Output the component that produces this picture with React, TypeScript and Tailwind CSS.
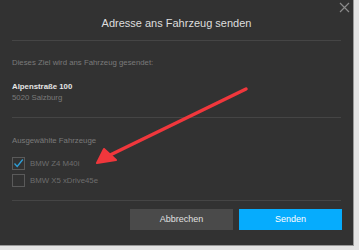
import { useState } from 'react';

const vehicles = [
	{ id: 'z4', name: 'BMW Z4 M40i' },
	{ id: 'x5', name: 'BMW X5 xDrive45e' },
];

const font = { fontFamily: '"Liberation Sans", Arial, sans-serif' };

export default function App() {
	const [selected, setSelected] = useState<Record<string, boolean>>({ z4: true, x5: false });

	return (
		<div className="w-[359px] h-[250px] bg-[#e4e4e4] overflow-hidden" style={font}>
			<div className="relative w-[354px] h-[246px] bg-[#323232] border-r border-b border-[#9a9a9a] flex flex-col px-3">
				{/* close */}
				<button className="absolute right-[3px] top-[2px] text-[#8a8a8a]">
					<svg width="11" height="11" viewBox="0 0 11 11" stroke="currentColor" strokeWidth="1.2">
						<path d="M1 1 L10 10 M10 1 L1 10" />
					</svg>
				</button>

				{/* title */}
				<h2 className="h-[41px] flex items-center justify-center text-[11px] text-[#dedede] pt-[6px] border-b border-[#454545]">
					Adresse ans Fahrzeug senden
				</h2>

				{/* destination */}
				<div className="border-b border-[#454545] h-[77px] pt-[16px]">
					<p className="text-[7.8px] text-[#7a7a7a] leading-[11px]">Dieses Ziel wird ans Fahrzeug gesendet:</p>
					<p className="mt-[13px] text-[7.8px] font-bold text-[#e6e6e6] leading-[11px]">Alpenstraße 100</p>
					<p className="text-[7.8px] text-[#7a7a7a] leading-[11px]">5020 Salzburg</p>
				</div>

				{/* vehicles */}
				<div className="border-b border-[#454545] h-[83px] pt-[17px]">
					<p className="text-[7.8px] text-[#7a7a7a] leading-[11px]">Ausgewählte Fahrzeuge</p>
					<div className="mt-[11px] flex flex-col gap-[4px]">
						{vehicles.map((v) => (
							<label key={v.id} className="flex items-center gap-[5px] cursor-pointer">
								<span
									className="w-[13px] h-[13px] border border-[#5a5a5a] flex items-center justify-center"
									onClick={() => setSelected((p) => ({ ...p, [v.id]: !p[v.id] }))}
								>
									{selected[v.id] && (
										<svg width="11" height="11" viewBox="0 0 11 11" fill="none" stroke="#2e9fd8" strokeWidth="1.3">
											<path d="M1.5 5.5 L4.2 8.5 L9.8 1.5" />
										</svg>
									)}
								</span>
								<span className="text-[7.8px] text-[#6e6e6e] leading-[11px]">{v.name}</span>
							</label>
						))}
					</div>
				</div>

				{/* actions */}
				<div className="flex justify-end gap-[6px] pt-[8px] mr-[-1px]">
					<button className="w-[103px] h-[21px] bg-[#4a4a4a] text-[#e0e0e0] text-[9px]">Abbrechen</button>
					<button className="w-[103px] h-[21px] bg-[#06acfd] text-white text-[9px]">Senden</button>
				</div>

				{/* annotation arrow */}
				<svg className="absolute left-0 top-0 pointer-events-none" width="354" height="246" viewBox="0 0 354 246">
					<line x1="246" y1="89" x2="106" y2="157" stroke="#f0373c" strokeWidth="3.5" strokeLinecap="round" />
					<path d="M97 163 L104 149 L116 160 Z" fill="#f0373c" stroke="#f0373c" strokeWidth="2" strokeLinejoin="round" />
				</svg>
			</div>
		</div>
	);
}
